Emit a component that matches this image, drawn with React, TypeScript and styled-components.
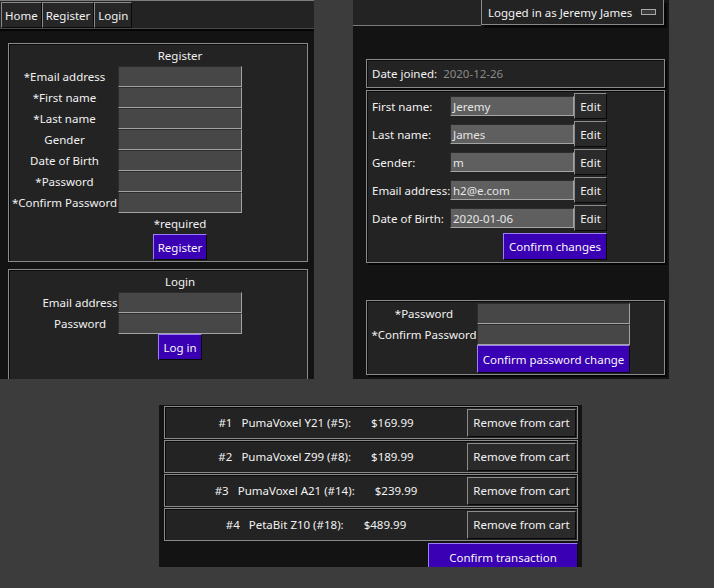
import React from "react";
import styled, { createGlobalStyle } from "styled-components";

const GlobalStyle = createGlobalStyle`
  html, body { margin: 0; padding: 0; background: #3c3c3c; }
  body {
    font-family: "Noto Sans", "DejaVu Sans", sans-serif;
    font-size: 11.5px;
    color: #f2f2f2;
  }
  * { box-sizing: border-box; }
`;

const Desktop = styled.div`
  width: 714px;
  height: 588px;
  background: #3c3c3c;
  display: flex;
  flex-direction: column;
  overflow: hidden;
`;

const TopRow = styled.div`
  display: flex;
  align-items: flex-start;
  gap: 39px;
`;

const Window = styled.div<{ $w: number; $h: number }>`
  width: ${(p) => p.$w}px;
  height: ${(p) => p.$h}px;
  background: #131313;
  overflow: hidden;
  display: flex;
  flex-direction: column;
  align-items: flex-start;
  flex-shrink: 0;
`;

/* ---------- panel 1 ---------- */
const NavBar = styled.div`
  width: 100%;
  height: 29px;
  display: flex;
  padding: 1px 0 0 1px;
  background: #232323;
  border-top: 1px solid #7c7c7c;
  border-bottom: 1px solid #4a4a4a;
  box-shadow: 0 2px 0 #050505;
  flex-shrink: 0;
`;

const NavButton = styled.div`
  height: 26px;
  padding: 0 3px;
  display: flex;
  align-items: center;
  background: #262626;
  border: 1px solid;
  border-color: #8a8a8a #0a0a0a #0a0a0a #8a8a8a;
  color: #f2f2f2;
`;

const FormBox = styled.div<{ $mt: number; $h?: number }>`
  margin: ${(p) => p.$mt}px 0 0 8px;
  width: 300px;
  ${(p) => (p.$h ? `height: ${p.$h}px;` : "")}
  background: #232323;
  border: 1px solid #8a8a8a;
  box-shadow: inset 1px 1px 0 #0a0a0a;
  flex-shrink: 0;
`;

const FormGrid = styled.div<{ $pl: number; $lw: number; $rows: string }>`
  display: grid;
  grid-template-columns: ${(p) => p.$lw}px 124px;
  grid-template-rows: ${(p) => p.$rows};
  padding: 0 0 0 ${(p) => p.$pl}px;
`;

const FormTitle = styled.div`
  grid-column: 2;
  display: flex;
  align-items: center;
  justify-content: center;
`;

const FieldLabel = styled.div`
  grid-column: 1;
  display: flex;
  align-items: center;
  justify-content: center;
  white-space: nowrap;
`;

const DarkInput = styled.div<{ $bg?: string }>`
  grid-column: 2;
  background: ${(p) => p.$bg || "#474747"};
  border: 1px solid;
  border-color: #2c2c2c #a3a3a3 #a3a3a3 #2c2c2c;
  display: flex;
  align-items: center;
  padding-left: 4px;
  color: #e6e6e6;
`;

const Note = styled.div`
  grid-column: 2;
  display: flex;
  align-items: center;
  justify-content: center;
`;

const PurpleButton = styled.div`
  height: 26px;
  padding: 0 4px;
  display: flex;
  align-items: center;
  justify-content: center;
  background: #3a00b4;
  border: 1px solid;
  border-color: #9c7ef6 #080808 #080808 #9c7ef6;
  color: #f6f6f6;
  white-space: nowrap;
`;

const FormButton = styled(PurpleButton)`
  grid-column: 2;
  justify-self: center;
  align-self: start;
`;

/* ---------- panel 2 ---------- */
const ProfileTop = styled.div`
  width: 100%;
  display: flex;
  align-items: flex-start;
  flex-shrink: 0;
`;

const TopTab = styled.div`
  width: 128px;
  height: 26px;
  background: #232323;
  border-bottom: 1px solid #7a7a7a;
`;

const UserBox = styled.div`
  width: 183px;
  height: 25px;
  background: #232323;
  border: 1px solid #8a8a8a;
  border-top: none;
  box-shadow: 3px 3px 0 #070707;
  display: flex;
  align-items: center;
  padding: 0 0 0 6px;
  gap: 9px;
`;

const MenuGlyph = styled.span`
  width: 15px;
  height: 6px;
  border: 1px solid #a8a8a8;
  background: #3a3a3a;
  margin-top: -1px;
`;

const InfoBox = styled.div<{ $mt: number }>`
  margin: ${(p) => p.$mt}px 0 0 13px;
  width: 299px;
  background: #232323;
  border: 1px solid #8a8a8a;
  box-shadow: inset 1px 1px 0 #0a0a0a, 2px 2px 0 #050505;
  flex-shrink: 0;
`;

const JoinedRow = styled.div`
  height: 27px;
  display: flex;
  align-items: center;
  padding-left: 5px;
  gap: 6px;
`;

const Muted = styled.span`
  color: #8a8a8a;
`;

const ProfileGrid = styled.div`
  display: grid;
  grid-template-columns: 78px 124px 33px;
  grid-template-rows: repeat(5, 26px) 27px;
  row-gap: 2px;
  padding: 2px 0 2px 5px;
  align-items: center;
`;

const ProfileLabel = styled.div`
  white-space: nowrap;
`;

const ProfileInput = styled(DarkInput)`
  grid-column: auto;
  height: 20px;
  padding-left: 2px;
`;

const EditButton = styled.div`
  height: 26px;
  display: flex;
  align-items: center;
  justify-content: center;
  background: #2a2a2a;
  border: 1px solid;
  border-color: #8c8c8c #080808 #080808 #8c8c8c;
`;

const ConfirmChanges = styled(PurpleButton)`
  grid-column: 1 / 4;
  justify-self: end;
  height: 27px;
  width: 104px;
  padding: 0;
`;

const PasswordGrid = styled.div`
  display: grid;
  grid-template-columns: 106px 153px;
  grid-template-rows: 21px 21px 28px;
  padding: 2px 0 1px 4px;
`;

const PasswordButton = styled(PurpleButton)`
  grid-column: 2;
  height: 28px;
  padding: 0;
`;

/* ---------- panel 3 ---------- */
const CartWindow = styled.div`
  margin: 26px 0 0 159px;
  width: 423px;
  height: 162px;
  background: #131313;
  overflow: hidden;
  display: flex;
  flex-direction: column;
  align-items: flex-end;
  gap: 1px;
  padding: 1px 4px 0 5px;
  flex-shrink: 0;
`;

const CartRow = styled.div`
  width: 414px;
  height: 33px;
  flex-shrink: 0;
  display: flex;
  align-items: center;
  background: #232323;
  border: 1px solid #8a8a8a;
  box-shadow: inset 1px 1px 0 #0a0a0a;
  padding-right: 1px;
`;

const CartText = styled.div`
  flex: 1;
  display: flex;
  justify-content: center;
  white-space: nowrap;
`;

const CartName = styled.span`
  margin-left: 9px;
`;

const CartPrice = styled.span`
  margin-left: 20px;
`;

const RemoveButton = styled(EditButton)`
  width: 109px;
  height: 28px;
`;

const ConfirmTransaction = styled(PurpleButton)`
  width: 150px;
  height: 28px;
  margin-top: 1px;
  flex-shrink: 0;
`;

const registerFields = [
  "*Email address",
  "*First name",
  "*Last name",
  "Gender",
  "Date of Birth",
  "*Password",
  "*Confirm Password",
];

const profileFields: [string, string][] = [
  ["First name:", "Jeremy"],
  ["Last name:", "James"],
  ["Gender:", "m"],
  ["Email address:", "h2@e.com"],
  ["Date of Birth:", "2020-01-06"],
];

const cart = [
  ["#1", "PumaVoxel Y21 (#5):", "$169.99"],
  ["#2", "PumaVoxel Z99 (#8):", "$189.99"],
  ["#3", "PumaVoxel A21 (#14):", "$239.99"],
  ["#4", "PetaBit Z10 (#18):", "$489.99"],
];

export default function App() {
  return (
    <Desktop>
      <GlobalStyle />
      <TopRow>
        <Window $w={314} $h={379}>
          <NavBar>
            <NavButton>Home</NavButton>
            <NavButton>Register</NavButton>
            <NavButton>Login</NavButton>
          </NavBar>
          <FormBox $mt={14}>
            <FormGrid $pl={2} $lw={107} $rows="22px repeat(8, 21px) 27px">
              <FormTitle>Register</FormTitle>
              {registerFields.map((f) => (
                <React.Fragment key={f}>
                  <FieldLabel>{f}</FieldLabel>
                  <DarkInput />
                </React.Fragment>
              ))}
              <Note>*required</Note>
              <FormButton>Register</FormButton>
            </FormGrid>
          </FormBox>
          <FormBox $mt={7} $h={130}>
            <FormGrid $pl={33} $lw={76} $rows="22px 21px 21px 27px">
              <FormTitle>Login</FormTitle>
              <FieldLabel>Email address</FieldLabel>
              <DarkInput />
              <FieldLabel>Password</FieldLabel>
              <DarkInput />
              <FormButton>Log in</FormButton>
            </FormGrid>
          </FormBox>
        </Window>

        <Window $w={316} $h={379}>
          <ProfileTop>
            <TopTab />
            <UserBox>
              <span>Logged in as Jeremy James</span>
              <MenuGlyph />
            </UserBox>
          </ProfileTop>
          <InfoBox $mt={33}>
            <JoinedRow>
              <span>Date joined:</span>
              <Muted>2020-12-26</Muted>
            </JoinedRow>
          </InfoBox>
          <InfoBox $mt={2}>
            <ProfileGrid>
              {profileFields.map(([l, v]) => (
                <React.Fragment key={l}>
                  <ProfileLabel>{l}</ProfileLabel>
                  <ProfileInput $bg="#5f5f5f">{v}</ProfileInput>
                  <EditButton>Edit</EditButton>
                </React.Fragment>
              ))}
              <ConfirmChanges>Confirm changes</ConfirmChanges>
            </ProfileGrid>
          </InfoBox>
          <InfoBox $mt={37}>
            <PasswordGrid>
              <FieldLabel>*Password</FieldLabel>
              <DarkInput />
              <FieldLabel>*Confirm Password</FieldLabel>
              <DarkInput />
              <PasswordButton>Confirm password change</PasswordButton>
            </PasswordGrid>
          </InfoBox>
        </Window>
      </TopRow>

      <CartWindow>
        {cart.map(([n, name, price]) => (
          <CartRow key={n}>
            <CartText>
              <span>{n}</span>
              <CartName>{name}</CartName>
              <CartPrice>{price}</CartPrice>
            </CartText>
            <RemoveButton>Remove from cart</RemoveButton>
          </CartRow>
        ))}
        <ConfirmTransaction>Confirm transaction</ConfirmTransaction>
      </CartWindow>
    </Desktop>
  );
}
